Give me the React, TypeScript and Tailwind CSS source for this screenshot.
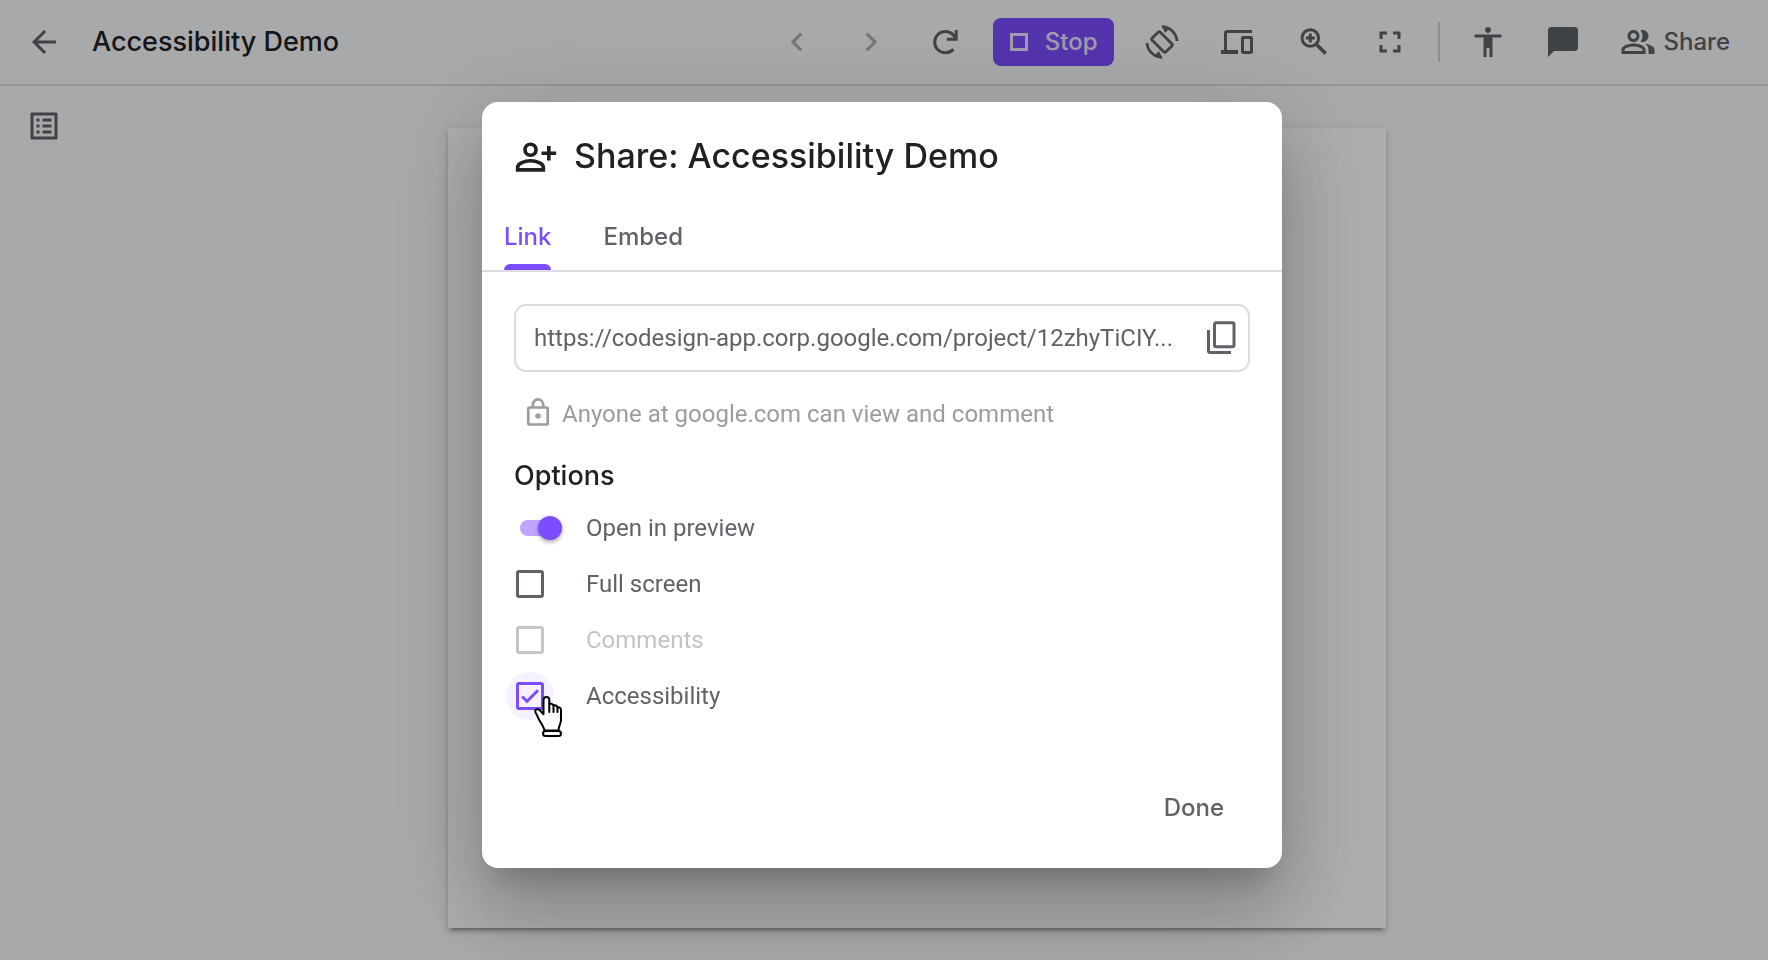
import React, { useState } from "react";
import {
  MdAccessibility,
  MdArrowBack,
  MdChatBubble,
  MdChevronLeft,
  MdChevronRight,
  MdFullscreen,
  MdListAlt,
  MdOutlinePeopleAlt,
} from "react-icons/md";

function RefreshIcon() {
  return (
    <svg viewBox="0 0 36 36" className="size-9" fill="none" stroke="currentColor" strokeWidth="3">
      <path d="M26.4 25.2A10.7 10.7 0 1 1 26.6 11.2L29 14.6" />
      <path d="M29.2 6V15.2H19.8" />
    </svg>
  );
}

function RotateIcon() {
  return (
    <svg viewBox="0 0 36 36" className="size-9" fill="none" stroke="currentColor" strokeWidth="2.800">
      <rect x="8.300" y="12.300" width="19.400" height="11.400" rx="1.500" transform="rotate(45 18 18)" />
      <path d="M18 2.700A15.300 15.300 0 0 1 33 17" />
      <path d="M17.500 1.300L21 9L25.500 4.500Z" fill="currentColor" stroke="none" />
      <path d="M18 33.300A15.300 15.300 0 0 1 3 19" />
      <path d="M18.500 34.700L15 27L10.500 31.500Z" fill="currentColor" stroke="none" />
    </svg>
  );
}

function DevicesIcon() {
  return (
    <svg viewBox="0 0 36 36" className="size-9" fill="none" stroke="currentColor">
      <path d="M32 7.500H7A1.500 1.500 0 0 0 5.500 9V27" strokeWidth="3" />
      <path d="M1 28H18" strokeWidth="4" />
      <rect x="22.500" y="13.500" width="9" height="15" rx="0.8" strokeWidth="3" />
    </svg>
  );
}

function ZoomInIcon() {
  return (
    <svg viewBox="0 0 36 36" className="size-9" fill="none" stroke="currentColor" strokeWidth="3">
      <circle cx="14.300" cy="14" r="8.300" />
      <path d="M20 20L29.600 29.500" strokeWidth="3.600" />
      <path d="M14.300 9.500V18.500M9.800 14H18.800" />
    </svg>
  );
}

function PersonAddIcon() {
  return (
    <svg viewBox="0 0 24 24" className="size-11" fill="none" stroke="currentColor" strokeWidth="2">
      <circle cx="9" cy="8.600" r="3" />
      <path d="M2 19.600V18.200C2 16.100 5.700 14.600 9 14.600S16 16.100 16 18.200V19.600Z" />
      <path d="M19 6.500V14.500M15 10.500H23" />
    </svg>
  );
}

function CopyIcon() {
  return (
    <svg viewBox="0 0 36 36" className="size-9" fill="none" stroke="currentColor" strokeWidth="3">
      <rect x="10.500" y="2.800" width="19.500" height="24" rx="1.500" />
      <path d="M4.500 10V30.500A1.500 1.500 0 0 0 6 32.500H27" />
    </svg>
  );
}

function LockIcon() {
  return (
    <svg viewBox="0 1 32 32" className="size-8" fill="none" stroke="currentColor" strokeWidth="2.700">
      <rect x="6.250" y="10.500" width="19.500" height="17" rx="1.500" />
      <path d="M10.800 10.500V7.600A5.200 5.200 0 0 1 21.200 7.600V10.500" />
      <circle cx="16" cy="19" r="2.800" fill="currentColor" stroke="none" />
    </svg>
  );
}

function HandPointer() {
  return (
    <svg
      viewBox="0 0 30 42"
      aria-hidden="true"
      className="pointer-events-none absolute left-7 top-6 h-[42px] w-[30px]"
      fill="#fff"
      stroke="#000"
      strokeWidth="2"
      strokeLinecap="round"
      strokeLinejoin="round"
    >
      <path d="M10.500 34.500C10 31 5.500 25.500 3.300 19.800C2.500 17.800 1 16.500 1.200 15C1.600 13 4.200 12.800 5.800 14.200C7.200 15.400 8 17 9.500 18.200V4C9.500 0 15.300 0 15.300 4V8C17 7.200 19 7.800 19.500 9.600C21.200 8.800 23 9.500 23.500 11.400C25.500 11 27 12 27 14.200V24C27 28 24.500 30 24.500 34.500Z" />
      <path d="M15.300 8V16M19.500 9.800V16M23.500 11.800V16" />
      <rect x="9" y="35" width="18" height="5" rx="2.500" />
    </svg>
  );
}

type OptionRowProps = {
  id: string;
  label: string;
  checked: boolean;
  onChange: (value: boolean) => void;
  disabled?: boolean;
  kind?: "switch" | "checkbox";
  hovered?: boolean;
};

function OptionRow({ id, label, checked, onChange, disabled, kind = "checkbox", hovered }: OptionRowProps) {
  return (
    <div className="flex h-14 items-center">
      <div className="w-20 shrink-0">
        {kind === "switch" ? (
          <input
            id={id}
            type="checkbox"
            role="switch"
            checked={checked}
            onChange={(e) => onChange(e.target.checked)}
            className="ml-[14px] flex h-4 w-[42px] appearance-none items-center rounded-full bg-[#c9cbd0] before:size-6 before:shrink-0 before:rounded-full before:bg-white before:shadow-[0_2px_4px_rgba(0,0,0,0.35)] checked:justify-end checked:bg-[#bea6ff] checked:before:bg-[#7c4dff]"
          />
        ) : (
          <div className={hovered ? "relative grid size-12 place-items-center rounded-full bg-[#f5f1ff]" : "grid size-12 place-items-center"}>
            <input
              id={id}
              type="checkbox"
              checked={checked}
              disabled={disabled}
              onChange={(e) => onChange(e.target.checked)}
              className="peer col-start-1 row-start-1 size-7 appearance-none rounded-[3px] border-[3px] border-[#5f6368] checked:border-[#7c4dff] disabled:border-[#c4c5c7]"
            />
            <svg
              viewBox="0 0 28 28"
              className="pointer-events-none invisible col-start-1 row-start-1 size-7 text-[#7c4dff] peer-checked:visible"
              fill="none"
              stroke="currentColor"
              strokeWidth="3"
            >
              <path d="M6.200 14.500L11 19.300L22 8.300" />
            </svg>
            {hovered && <HandPointer />}
          </div>
        )}
      </div>
      <label
        htmlFor={id}
        className={disabled ? "text-2xl text-[#c1c3c5]" : "text-2xl text-[#5f6368]"}
      >
        {label}
      </label>
    </div>
  );
}

const iconButton = "flex size-9 shrink-0 items-center justify-center";

export default function App() {
  const [preview, setPreview] = useState(true);
  const [fullScreen, setFullScreen] = useState(false);
  const [accessibility, setAccessibility] = useState(true);

  return (
    <div className="flex min-h-screen flex-col bg-[#f8f9fb] font-['Inter',sans-serif] text-[#5f6368]">
      <header className="flex items-center justify-between border-b-2 border-[#dadce0] pb-[18px] pl-[26px] pr-[38px] pt-[18px]">
        <div className="flex items-center gap-[30px]">
          <button type="button" aria-label="Back" className={iconButton}>
            <MdArrowBack className="size-9" />
          </button>
          <h1 className="whitespace-nowrap text-[27px] font-medium leading-8 text-[#202124]">Accessibility Demo</h1>
        </div>
        <div className="flex items-center gap-[30px]">
          <div className="flex items-center gap-[38px]">
            <button type="button" aria-label="Previous" className={iconButton}>
              <MdChevronLeft className="size-[38px] shrink-0 text-[#afb1b4]" />
            </button>
            <button type="button" aria-label="Next" className={iconButton}>
              <MdChevronRight className="size-[38px] shrink-0 text-[#afb1b4]" />
            </button>
            <button type="button" aria-label="Restart" className={iconButton}>
              <RefreshIcon />
            </button>
          </div>
          <button
            type="button"
            className="flex h-12 items-center gap-4 rounded-lg bg-[#7c4dff] px-4 text-2xl font-medium text-[#ece6ff]"
          >
            <svg viewBox="0 0 20 20" className="size-5" fill="none" stroke="currentColor" strokeWidth="3">
              <rect x="2.500" y="2.500" width="15" height="15" />
            </svg>
            Stop
          </button>
          <div className="flex items-center gap-10">
            <button type="button" aria-label="Rotate screen" className={iconButton}>
              <RotateIcon />
            </button>
            <button type="button" aria-label="Devices" className={iconButton}>
              <DevicesIcon />
            </button>
            <button type="button" aria-label="Zoom in" className={iconButton}>
              <ZoomInIcon />
            </button>
            <button type="button" aria-label="Full screen view" className={iconButton}>
              <MdFullscreen className="size-9" />
            </button>
          </div>
          <div className="h-10 w-[2px] bg-[#d0d2d6]" />
          <div className="flex items-center gap-[39px]">
            <button type="button" aria-label="Accessibility view" className={iconButton}>
              <MdAccessibility className="size-9" />
            </button>
            <button type="button" aria-label="Comments view" className={iconButton}>
              <MdChatBubble className="size-9" />
            </button>
            <button type="button" className="flex items-center gap-2 text-2xl font-medium">
              <MdOutlinePeopleAlt className="size-9" />
              Share
            </button>
          </div>
        </div>
      </header>

      <div className="flex grow">
        <aside className="w-[66px] shrink-0 pl-[26px] pt-[22px]">
          <button type="button" aria-label="Outline" className={iconButton}>
            <MdListAlt className="size-9" />
          </button>
        </aside>
        <main className="flex grow justify-center pb-8 pt-[42px]">
          <div className="h-[800px] w-full max-w-[938px] bg-white shadow-[0_6px_2px_-4px_rgba(0,0,0,0.2),0_4px_4px_rgba(0,0,0,0.14),0_2px_10px_rgba(0,0,0,0.12)]" />
        </main>
      </div>

      <div className="fixed inset-0 flex items-start justify-center overflow-auto bg-black/32 pr-1 pt-[102px]">
        <section
          role="dialog"
          aria-modal="true"
          aria-labelledby="share-title"
          className="w-full max-w-[800px] rounded-2xl bg-white shadow-[0_22px_30px_-14px_rgba(0,0,0,0.2),0_48px_76px_6px_rgba(0,0,0,0.14),0_18px_92px_16px_rgba(0,0,0,0.12)]"
        >
          <div className="flex items-center gap-4 px-8 pt-8 text-[#202124]">
            <PersonAddIcon />
            <h2 id="share-title" className="text-[34px] font-medium leading-10">
              Share: Accessibility Demo
            </h2>
          </div>

          <div role="tablist" className="mt-11 flex gap-[52px] border-b-2 border-[#dadce0] px-[22px]">
            <button type="button" role="tab" aria-selected="true" className="flex flex-col gap-3 text-2xl font-medium leading-[30px] text-[#7c4dff]">
              Link
              <span className="h-[6px] w-full rounded-t-md bg-[#7c4dff]" />
            </button>
            <button type="button" role="tab" aria-selected="false" className="flex flex-col text-2xl font-medium leading-[30px]">
              Embed
            </button>
          </div>

          <div className="px-8 pt-8 font-['Roboto',sans-serif]">
            <div className="flex h-[68px] items-center rounded-xl border-2 border-[#dadce0] pl-[18px] pr-2">
              <input
                type="text"
                readOnly
                aria-label="Project link"
                value="https://codesign-app.corp.google.com/project/12zhyTiCIY..."
                className="min-w-0 flex-1 text-2xl outline-none"
              />
              <button type="button" aria-label="Copy link" className={iconButton}>
                <CopyIcon />
              </button>
            </div>
            <p className="ml-2 mt-[26px] flex items-center gap-2 text-2xl text-[#9b9c9f]">
              <LockIcon />
              Anyone at google.com can view and comment
            </p>
            <h3 className="mt-[30px] font-['Inter',sans-serif] text-[27px] font-medium leading-8 text-[#202124]">Options</h3>
          </div>

          <div className="mt-2 px-6 font-['Roboto',sans-serif]">
            <OptionRow id="preview" label="Open in preview" kind="switch" checked={preview} onChange={setPreview} />
            <OptionRow id="full-screen" label="Full screen" checked={fullScreen} onChange={setFullScreen} />
            <OptionRow id="comments" label="Comments" checked={false} onChange={() => {}} disabled />
            <OptionRow id="accessibility" label="Accessibility" checked={accessibility} onChange={setAccessibility} hovered />
          </div>

          <div className="mt-[60px] flex justify-end px-8 pb-9">
            <button type="button" className="h-12 px-[26px] text-2xl font-medium">
              Done
            </button>
          </div>
        </section>
      </div>
    </div>
  );
}
